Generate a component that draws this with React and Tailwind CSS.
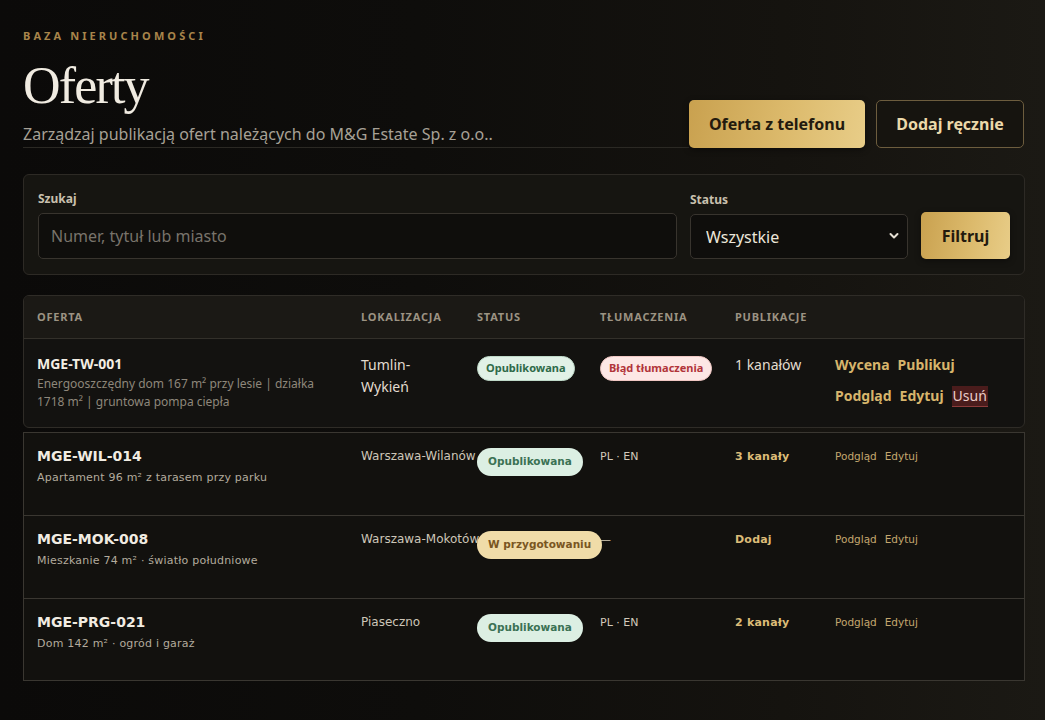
import React from "react";

const cols = "grid grid-cols-[324px_116px_123px_135px_100px_1fr]";
const noto = { fontFamily: '"Noto Sans", "Open Sans", sans-serif' };
const deja = { fontFamily: '"DejaVu Sans", sans-serif' };

function GoldBtn({ children, className = "" }) {
  return (
    <button
      className={
        "rounded-[5px] bg-[linear-gradient(100deg,#c9a14f_0%,#dcba6c_55%,#e8cd88_100%)] font-bold text-[#231a0e] shadow-[0_2px_6px_rgba(0,0,0,0.4)] " +
        className
      }
    >
      {children}
    </button>
  );
}

function SmallRow({ code, desc, loc, status, statusKind, tr, pub, last }) {
  return (
    <div
      className={
        cols +
        " h-[83px] border-x border-t border-[#3a3731] bg-[#12110e] pt-[15px] " +
        (last ? "border-b" : "")
      }
      style={deja}
    >
      <div className="pl-[13px]">
        <div className="text-[14px] font-bold leading-[17px] text-[#f1ece2]">{code}</div>
        <div className="mt-[6px] text-[11px] leading-[14px] tracking-[0.02em] text-[#b3ab9d]">{desc}</div>
      </div>
      <div className="whitespace-nowrap pl-[13px] text-[12px] leading-[17px] text-[#cdc6b8]">{loc}</div>
      <div className="pl-[13px]">
        <span
          className={
            "relative z-10 -mt-[1px] inline-flex h-[28px] items-center whitespace-nowrap rounded-full px-[11px] text-[10.5px] font-bold " +
            (statusKind === "ok"
              ? "bg-[#dcefe3] text-[#3b7254]"
              : "bg-[#f0dca8] text-[#7a5622]")
          }
        >
          {status}
        </span>
      </div>
      <div className="pl-[13px] text-[11px] leading-[17px] text-[#d2cabb]">{tr}</div>
      <div className="pl-[13px] text-[11px] font-bold leading-[17px] tracking-[0.02em] text-[#dcbc78]">{pub}</div>
      <div className="flex gap-[8px] pl-[13px] text-[10.5px] leading-[17px] text-[#c4a76e]">
        <span>Podgląd</span>
        <span>Edytuj</span>
      </div>
    </div>
  );
}

export default function App() {
  return (
    <div
      className="min-h-[720px] w-full bg-[linear-gradient(90deg,#0b0a09_0%,#0e0d0b_40%,#15130f_75%,#1b1914_100%)] pb-[40px]"
      style={noto}
    >
      <div className="ml-[23px] w-[1002px] pt-[29px]">
        {/* Header */}
        <div className="flex items-end">
          <div className="flex-1 border-b border-[#2b2924] pb-[1px]">
            <div className="text-[11px] font-bold leading-[14px] tracking-[0.28em] text-[#a8854b]">
              BAZA NIERUCHOMOŚCI
            </div>
            <h1
              className="mt-[12px] text-[52px] leading-[62px] tracking-[-0.035em] text-[#f0ebe1]"
              style={{ fontFamily: '"Liberation Serif", "Times New Roman", serif' }}
            >
              Oferty
            </h1>
            <p className="mt-[5px] text-[16px] leading-[24px] text-[#a7a196]">
              Zarządzaj publikacją ofert należących do M&amp;G Estate Sp. z o.o..
            </p>
          </div>
          <div className="flex gap-[11px] pr-[1px]">
            <GoldBtn className="h-[48px] w-[176px] text-[16px]">Oferta z telefonu</GoldBtn>
            <button className="h-[48px] w-[148px] rounded-[5px] border border-[#6d5d3e] bg-[#16140f] text-[16px] font-bold text-[#ecd9aa]">
              Dodaj ręcznie
            </button>
          </div>
        </div>

        {/* Filters */}
        <div className="mt-[26px] flex items-end gap-[13px] rounded-[6px] border border-[#2d2a25] bg-[#161511] px-[14px] pb-[15px] pt-[16px]">
          <div className="flex-1">
            <div className="mb-[6px] text-[12px] font-bold leading-[16px] text-[#c9c0ae]">Szukaj</div>
            <input
              placeholder="Numer, tytuł lub miasto"
              className="h-[46px] w-full rounded-[5px] border border-[#38342e] bg-[#0f0e0c] px-[12px] text-[16px] text-[#e8e2d6] outline-none placeholder:text-[#78736b]"
              style={noto}
            />
          </div>
          <div className="w-[218px]">
            <div className="mb-[6px] text-[12px] font-bold leading-[16px] text-[#c9c0ae]">Status</div>
            <div className="relative">
              <select
                className="h-[45px] w-full appearance-none rounded-[5px] border border-[#38342e] bg-[#0f0e0c] px-[15px] text-[16px] text-[#ece6da] outline-none"
                style={noto}
                defaultValue="all"
              >
                <option value="all">Wszystkie</option>
              </select>
              <svg
                className="pointer-events-none absolute right-[9px] top-[18px]"
                width="10"
                height="8"
                viewBox="0 0 10 8"
              >
                <path d="M1.5 2 L5 5.5 L8.5 2" fill="none" stroke="#e6e0d4" strokeWidth="2" strokeLinecap="round" strokeLinejoin="round" />
              </svg>
            </div>
          </div>
          <GoldBtn className="h-[47px] w-[89px] text-[16px]">Filtruj</GoldBtn>
        </div>

        {/* Table card */}
        <div className="mt-[20px] overflow-hidden rounded-[6px] border border-[#2f2c27] bg-[#131210]">
          <div className={cols + " h-[43px] items-center border-b border-[#33302a] bg-[#1b1915]"}>
            {["OFERTA", "LOKALIZACJA", "STATUS", "TŁUMACZENIA", "PUBLIKACJE", ""].map((h, i) => (
              <div key={i} className="pl-[13px] text-[11px] font-bold tracking-[0.07em] text-[#9c9383]">
                {h}
              </div>
            ))}
          </div>
          <div className={cols + " h-[88px] pt-[15px]"}>
            <div className="pl-[13px] pr-[22px]">
              <div className="text-[14px] font-bold leading-[20px] text-[#f3eee4]">MGE-TW-001</div>
              <div className="mt-[1px] text-[12px] leading-[18px] text-[#8e877b]">
                Energooszczędny dom 167 m² przy lesie | działka 1718 m² | gruntowa pompa ciepła
              </div>
            </div>
            <div className="pl-[13px] pr-[30px] text-[14px] leading-[22px] text-[#e2dccf]">Tumlin-Wykień</div>
            <div className="pl-[13px]">
              <span className="inline-flex h-[25px] items-center rounded-full border border-[#bfd9c8] bg-[#e1f1e7] px-[8px] text-[11px] font-bold text-[#2f6a49]">
                Opublikowana
              </span>
            </div>
            <div className="pl-[13px]">
              <span className="inline-flex h-[25px] items-center rounded-full border border-[#f0c7c3] bg-[#fde7e5] px-[8px] text-[11px] font-bold text-[#b1343a]">
                Błąd tłumaczenia
              </span>
            </div>
            <div className="pl-[13px] text-[14px] leading-[22px] text-[#e2dccf]">1 kanałów</div>
            <div className="pl-[13px] text-[14px] font-bold text-[#d7b56c]">
              <div className="flex gap-[8px] leading-[22px]">
                <span>Wycena</span>
                <span>Publikuj</span>
              </div>
              <div className="mt-[9px] flex items-center gap-[8px] leading-[22px]">
                <span>Podgląd</span>
                <span>Edytuj</span>
                <span className="border-b border-[#8c3b3b] bg-[#4a1c1c] px-[1px] font-normal leading-[20px] text-[#ebcdc8]">
                  Usuń
                </span>
              </div>
            </div>
          </div>
        </div>

        <div className="mt-[4px]">
          <SmallRow
            code="MGE-WIL-014"
            desc="Apartament 96 m² z tarasem przy parku"
            loc="Warszawa-Wilanów"
            status="Opublikowana"
            statusKind="ok"
            tr="PL · EN"
            pub="3 kanały"
          />
          <SmallRow
            code="MGE-MOK-008"
            desc="Mieszkanie 74 m² · światło południowe"
            loc="Warszawa-Mokotów"
            status="W przygotowaniu"
            statusKind="prep"
            tr="—"
            pub="Dodaj"
          />
          <SmallRow
            code="MGE-PRG-021"
            desc="Dom 142 m² · ogród i garaż"
            loc="Piaseczno"
            status="Opublikowana"
            statusKind="ok"
            tr="PL · EN"
            pub="2 kanały"
            last
          />
        </div>
      </div>
    </div>
  );
}
